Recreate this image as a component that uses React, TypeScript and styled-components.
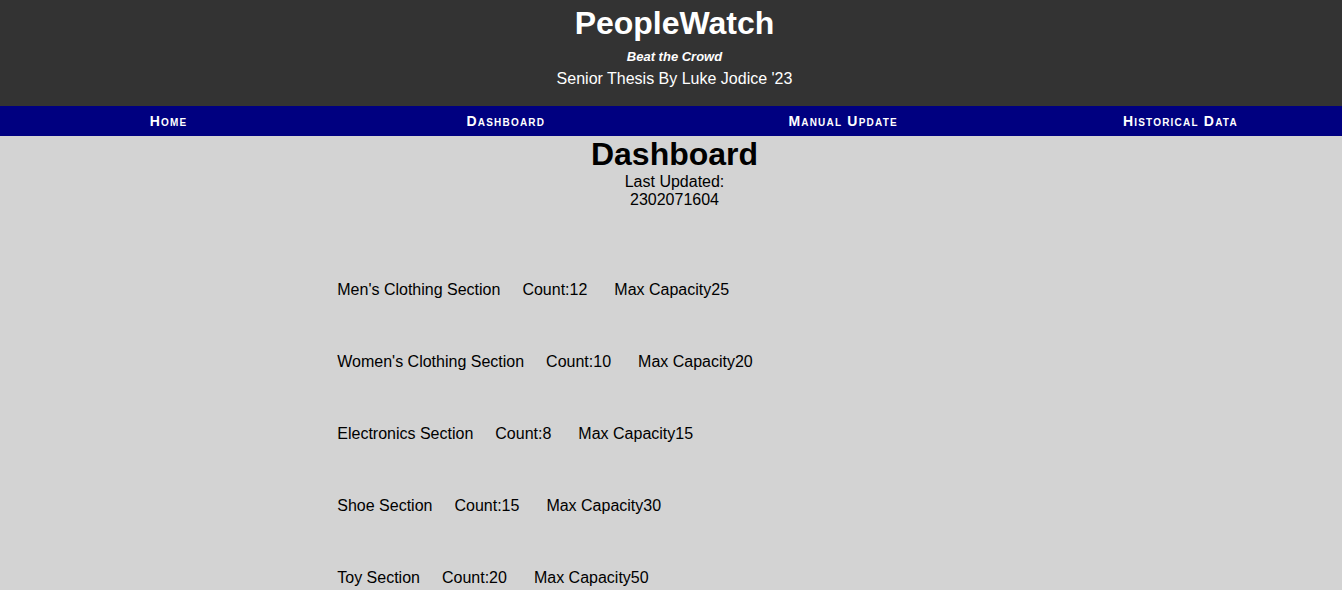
import React from "react";
import styled, { createGlobalStyle } from "styled-components";

const Global = createGlobalStyle`
  html { overflow-x: hidden; }
  html, body { margin: 0; padding: 0; }
  body {
    width: 1349px;
    background: #d3d3d3;
    font-family: "Liberation Sans", Arial, sans-serif;
    color: #000;
  }
`;

const Header = styled.header`
  background: #333333;
  color: #fff;
  height: 106px;
  box-sizing: border-box;
  padding-top: 5px;
  display: flex;
  flex-direction: column;
  align-items: center;
`;

const Title = styled.h1`
  margin: 0;
  font-size: 32px;
  font-weight: bold;
  line-height: 37px;
`;

const Tagline = styled.div`
  margin-top: 7px;
  font-size: 13px;
  font-weight: bold;
  font-style: italic;
  line-height: 15px;
`;

const Subtitle = styled.div`
  margin-top: 6px;
  font-size: 16px;
  line-height: 18px;
`;

const Nav = styled.nav`
  background: #000080;
  height: 30px;
  display: flex;
  align-items: center;
`;

const NavLink = styled.a`
  flex: 1;
  text-align: center;
  color: #fff;
  text-decoration: none;
  font-weight: bold;
  font-size: 14px;
  line-height: 16px;
  font-variant: small-caps;
  letter-spacing: 1.2px;
`;

const Main = styled.main`
  display: flex;
  flex-direction: column;
  align-items: center;
`;

const PageTitle = styled.h2`
  margin: 0;
  font-size: 32px;
  line-height: 37px;
  font-weight: bold;
`;

const Updated = styled.div`
  font-size: 16px;
  line-height: 18px;
  text-align: center;
`;

const List = styled.div`
  width: 50%;
  box-sizing: border-box;
  padding-top: 72px;
  display: flex;
  flex-direction: column;
  gap: 54px;
`;

const Row = styled.div`
  display: flex;
  font-size: 16px;
  line-height: 18px;
`;

const Cell = styled.span<{ $gap: number }>`
  margin-right: ${(p) => p.$gap}px;
`;

const sections = [
  { name: "Men's Clothing Section", count: 12, max: 25 },
  { name: "Women's Clothing Section", count: 10, max: 20 },
  { name: "Electronics Section", count: 8, max: 15 },
  { name: "Shoe Section", count: 15, max: 30 },
  { name: "Toy Section", count: 20, max: 50 },
];

export default function App() {
  return (
    <>
      <Global />
      <Header>
        <Title>PeopleWatch</Title>
        <Tagline>Beat the Crowd</Tagline>
        <Subtitle>Senior Thesis By Luke Jodice '23</Subtitle>
      </Header>
      <Nav>
        <NavLink href="#">Home</NavLink>
        <NavLink href="#">Dashboard</NavLink>
        <NavLink href="#">Manual Update</NavLink>
        <NavLink href="#">Historical Data</NavLink>
      </Nav>
      <Main>
        <PageTitle>Dashboard</PageTitle>
        <Updated>
          Last Updated:
          <br />
          2302071604
        </Updated>
        <List>
          {sections.map((s) => (
            <Row key={s.name}>
              <Cell $gap={22}>{s.name}</Cell>
              <Cell $gap={27}>Count:{s.count}</Cell>
              <Cell $gap={0}>Max Capacity{s.max}</Cell>
            </Row>
          ))}
        </List>
      </Main>
    </>
  );
}
